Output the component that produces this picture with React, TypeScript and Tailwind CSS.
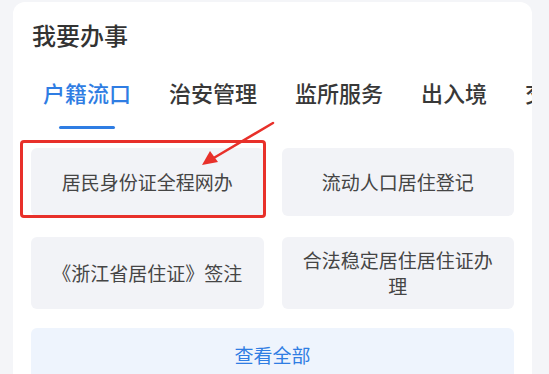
import React from "react";

const tabs = ["户籍流口", "治安管理", "监所服务", "出入境", "交通管理"];

const services = [
  "居民身份证全程网办",
  "流动人口居住登记",
  "《浙江省居住证》签注",
  "合法稳定居住居住证办理",
];

const App: React.FC = () => {
  return (
    <div
      className="relative h-[374px] w-[549px] overflow-hidden bg-[#f4f5f8] pl-[13px] pt-[2px]"
      style={{ fontFamily: '"Noto Sans CJK SC", "Noto Sans", sans-serif' }}
    >
      <div className="h-[400px] w-[519px] overflow-hidden rounded-xl bg-white">
        {/* title */}
        <h2 className="pl-[19px] pt-[17px] text-[24px] font-medium leading-[32px] text-[#333333]">
          我要办事
        </h2>

        {/* tabs, last one runs off the card */}
        <div className="mt-[26px] flex gap-[38px] whitespace-nowrap pl-[30px]">
          {tabs.map((tab, i) => (
            <div key={tab} className="flex shrink-0 flex-col items-center">
              <span
                className={
                  i === 0
                    ? "text-[22px] font-medium leading-[30px] text-[#2f7de3]"
                    : "text-[22px] font-medium leading-[30px] text-[#383838]"
                }
              >
                {tab}
              </span>
              {i === 0 && <div className="mt-[19px] h-[3px] w-[56px] rounded-full bg-[#2f7de3]" />}
            </div>
          ))}
        </div>

        {/* services */}
        <div className="mt-[19px] grid grid-cols-2 gap-x-[18px] gap-y-[21px] px-[18px]">
          {services.map((s) => (
            <div
              key={s}
              className="flex min-h-[68px] items-center justify-center rounded-md bg-[#f2f3f7] px-[16px] py-[10px] text-center text-[19px] leading-[26px] text-[#454545]"
            >
              {s}
            </div>
          ))}
        </div>

        <div className="mx-[18px] mt-[19px] flex h-[54px] items-center justify-center rounded-md bg-[#eef4fd] text-[19px] text-[#2f7de3]">
          查看全部
        </div>
      </div>

      {/* annotation: highlight box + arrow */}
      <div className="absolute left-[20px] top-[140px] h-[78px] w-[246px] rounded-[4px] border-[3px] border-[#e8302a]" />
      <svg className="absolute left-0 top-0" width="549" height="374" viewBox="0 0 549 374">
        <line x1="273" y1="123" x2="212" y2="159" stroke="#e8302a" strokeWidth="2.5" strokeLinecap="round" />
        <polygon points="202,165 210,151 218,162" fill="#e8302a" />
      </svg>
    </div>
  );
};

export default App;
